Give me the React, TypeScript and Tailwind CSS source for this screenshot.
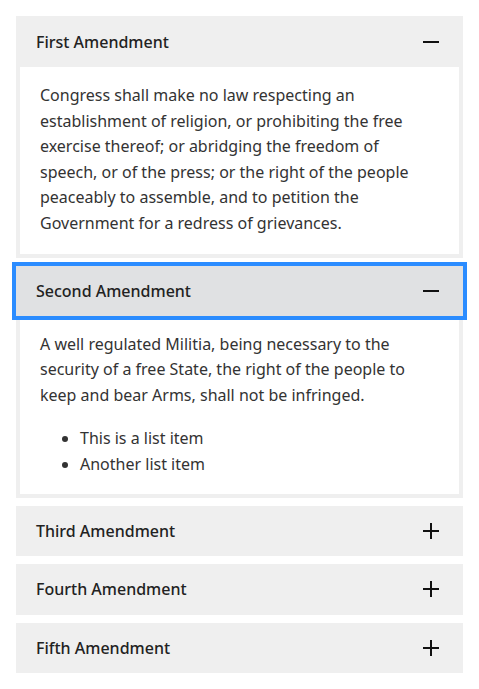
import React from "react";

function Minus() {
  return (
    <svg width="16" height="16" viewBox="0 0 16 16" aria-hidden>
      <rect x="0" y="7" width="16" height="2" fill="#111" />
    </svg>
  );
}
function Plus() {
  return (
    <svg width="16" height="16" viewBox="0 0 16 16" aria-hidden>
      <rect x="0" y="7" width="16" height="2" fill="#111" />
      <rect x="7" y="0" width="2" height="16" fill="#111" />
    </svg>
  );
}

function Header({ title, open, active, tall }: { title: string; open: boolean; active?: boolean; tall?: boolean }) {
  return (
    <div
      className={
        "flex items-center justify-between pl-5 pr-6 " +
        (tall ? "h-[51px] " : "h-[50px] ") +
        (active ? "bg-[#e0e1e3] outline-4 outline-[#2b8cff]" : "bg-[#efefef]")
      }
    >
      <span className="text-[16px] font-medium text-[#222]">{title}</span>
      {open ? <Minus /> : <Plus />}
    </div>
  );
}

export default function App() {
  return (
    <div
      className="flex min-h-[689px] flex-col gap-2 bg-white px-4 pt-4"
      style={{ fontFamily: '"Noto Sans", sans-serif' }}
    >
      <div>
        <Header title="First Amendment" open tall />
        <div className="border-4 border-t-0 border-[#efefef] bg-white px-5 pt-4 pb-[17px] text-[16px] leading-[1.6] text-[#333]">
          <p>
            Congress shall make no law respecting an establishment of religion, or prohibiting the free
            exercise thereof; or abridging the freedom of speech, or of the press; or the right of the people
            peaceably to assemble, and to petition the Government for a redress of grievances.
          </p>
        </div>
      </div>
      <div>
        <Header title="Second Amendment" open active />
        <div className="border-4 border-t-0 border-[#efefef] bg-white px-5 pt-4 pb-4 text-[16px] leading-[1.6] text-[#333]">
          <p>
            A well regulated Militia, being necessary to the security of a free State, the right of the people
            to keep and bear Arms, shall not be infringed.
          </p>
          <ul className="mt-[18px] list-disc pl-10">
            <li>This is a list item</li>
            <li>Another list item</li>
          </ul>
        </div>
      </div>
      <Header title="Third Amendment" open={false} />
      <Header title="Fourth Amendment" open={false} tall />
      <Header title="Fifth Amendment" open={false} />
    </div>
  );
}
